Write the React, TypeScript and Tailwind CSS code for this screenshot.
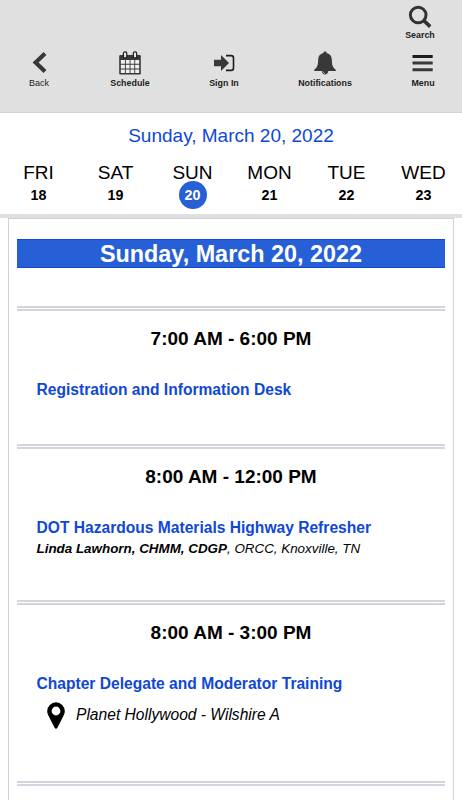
import React, { useState } from 'react';

interface Day {
  name: string;
  date: number;
}

interface Session {
  id: string;
  time: string;
  title: string;
  speaker?: string;
  affiliation?: string;
  location?: string;
}

const days: Day[] = [
  { name: 'FRI', date: 18 },
  { name: 'SAT', date: 19 },
  { name: 'SUN', date: 20 },
  { name: 'MON', date: 21 },
  { name: 'TUE', date: 22 },
  { name: 'WED', date: 23 },
];

const sessions: Session[] = [
  { id: 'desk', time: '7:00 AM - 6:00 PM', title: 'Registration and Information Desk' },
  {
    id: 'dot',
    time: '8:00 AM - 12:00 PM',
    title: 'DOT Hazardous Materials Highway Refresher',
    speaker: 'Linda Lawhorn, CHMM, CDGP',
    affiliation: ', ORCC, Knoxville, TN',
  },
  {
    id: 'delegate',
    time: '8:00 AM - 3:00 PM',
    title: 'Chapter Delegate and Moderator Training',
    location: 'Planet Hollywood - Wilshire A',
  },
];

const BackIcon = () => (
  <svg className="w-6 h-6" viewBox="0 0 24 24" fill="none" stroke="#383838" strokeWidth="4.2">
    <path d="M18 2.6 L8.6 11.6 L18 20.6" />
  </svg>
);

const CalendarIcon = () => (
  <svg className="w-6 h-6" viewBox="0 0 24 24">
    <rect x="1.2" y="4" width="21.6" height="19.6" rx="1.3" fill="#383838" />
    <path
      fill="#f0f0f0"
      d="M2.8 9h4.1v3.8H2.8z M7.8 9h3.8v3.8H7.8z M12.5 9h3.8v3.8h-3.8z M17.2 9h4v3.8h-4z M2.8 13.7h4.1v3.8H2.8z M7.8 13.7h3.8v3.8H7.8z M12.5 13.7h3.8v3.8h-3.8z M17.2 13.7h4v3.8h-4z M2.8 18.4h4.1v3.7H2.8z M7.8 18.4h3.8v3.7H7.8z M12.5 18.4h3.8v3.7h-3.8z M17.2 18.4h4v3.7h-4z"
    />
    <rect x="5.4" y="0.9" width="3.4" height="6" rx="1.5" fill="#e8e8e8" stroke="#1c1c1c" strokeWidth="1.2" />
    <rect x="15.3" y="0.9" width="3.4" height="6" rx="1.5" fill="#e8e8e8" stroke="#1c1c1c" strokeWidth="1.2" />
  </svg>
);

const SignInIcon = () => (
  <svg className="w-6 h-6" viewBox="0 0 24 24">
    <path fill="#383838" d="M2 8.7h7V4L17 12 9 20v-4.7H2z" />
    <path fill="none" stroke="#1c1c1c" strokeWidth="1.6" d="M14 4.6h5.1q2.4 0 2.4 2.4v10q0 2.4-2.4 2.4H14" />
  </svg>
);

const BellIcon = () => (
  <svg className="w-6 h-6" viewBox="0 0 24 24" fill="#383838">
    <path d="M12 0.5c1 0 1.6 0.7 1.6 1.6 3.4 0.8 5.2 3.3 5.2 6.4 0 6 1.4 8.4 4 10.3v1.3H1.2v-1.3C3.8 16.9 5.2 14.5 5.2 8.5c0-3.1 1.8-5.6 5.2-6.4 0-0.9 0.6-1.6 1.6-1.6z" />
    <path d="M8.8 20h6.4c0 2.2-1.4 3.6-3.2 3.6s-3.2-1.4-3.2-3.6z" />
    <path d="M10 20.4c0 1.3.8 2 2 2" fill="none" stroke="#e0e0e0" strokeWidth=".7" />
  </svg>
);

const MenuIcon = () => (
  <svg className="w-6 h-6" viewBox="0 0 24 24">
    <path fill="#1c1c1c" d="M1.5 4h20.2v3H1.5z" />
    <path fill="#383838" d="M1.5 10.6h20.2v3H1.5z M1.5 17.2h20.2v3H1.5z" />
  </svg>
);

const SearchIcon = () => (
  <svg className="w-6 h-6" viewBox="0 0 24 24" fill="none" stroke="#333">
    <circle cx="10.2" cy="10" r="7.8" strokeWidth="3" />
    <path d="M15.6 15.4 L22.2 21.6" strokeWidth="3.6" />
  </svg>
);

const PinIcon = () => (
  <svg className="w-[18px] h-[27px] shrink-0" viewBox="0 0 18 27">
    <path
      fillRule="evenodd"
      d="M9 .3a8.8 8.8 0 0 0-8.8 8.8c0 2 .6 3.3 1.4 4.8l6 11.9q1.4 1.8 2.8 0l6-11.9c.8-1.5 1.4-2.8 1.4-4.8A8.8 8.8 0 0 0 9 .3zM9 4.6a4.4 4.4 0 1 1 0 8.8 4.4 4.4 0 0 1 0-8.8z"
    />
  </svg>
);

interface NavButtonProps {
  label: string;
  className: string;
  labelClass?: string;
  children: React.ReactNode;
}

const NavButton: React.FC<NavButtonProps> = ({ label, className, labelClass = 'mt-[3px] font-bold text-[8.9px]', children }) => (
  <button className={`flex flex-col items-center shrink-0 ${className}`}>
    {children}
    <span className={`leading-[10px] whitespace-nowrap text-[#222] ${labelClass}`}>{label}</span>
  </button>
);

const App: React.FC = () => {
  const [selected, setSelected] = useState<number>(20);

  return (
    <div className="w-full h-screen overflow-hidden flex flex-col bg-white text-black font-['Liberation_Sans',Arial,sans-serif]">
      {/* Toolbar */}
      <header className="h-[113px] shrink-0 bg-[#e0e0e0] border-b border-[#d2d3d8]">
        <div className="flex justify-end pt-[5px] pr-[17px]">
          <NavButton label="Search" className="w-[50px]" labelClass="mt-px font-bold text-[8.9px]">
            <SearchIcon />
          </NavButton>
        </div>
        <nav className="flex pt-[11px]">
          <NavButton label="Back" className="w-[78px]" labelClass="mt-[3px] text-[9px]">
            <BackIcon />
          </NavButton>
          <NavButton label="Schedule" className="w-[104px]">
            <CalendarIcon />
          </NavButton>
          <NavButton label="Sign In" className="w-[84px]">
            <SignInIcon />
          </NavButton>
          <NavButton label="Notifications" className="w-[118px]">
            <BellIcon />
          </NavButton>
          <NavButton label="Menu" className="w-[78px]">
            <MenuIcon />
          </NavButton>
        </nav>
      </header>

      {/* Day picker */}
      <section className="h-[105px] shrink-0 border-b-4 border-[#e0e0e0]">
        <h1 className="pt-[11px] text-center text-[19px] leading-6 text-[#0f48d6]">Sunday, March {selected}, 2022</h1>
        <div className="grid grid-cols-6 pt-[15px]">
          {days.map(day => (
            <button key={day.date} onClick={() => setSelected(day.date)} className="flex flex-col items-center">
              <span className="text-[19px] leading-5">{day.name}</span>
              <span
                className={`w-7 h-7 -mt-[2px] rounded-full text-center text-[14.3px] leading-[29px] font-bold ${
                  day.date === selected ? 'bg-[#275fd6] text-white' : ''
                }`}
              >
                {day.date}
              </span>
            </button>
          ))}
        </div>
      </section>

      {/* Agenda */}
      <main className="flex-1 mx-2 px-2 pt-5 border border-b-0 border-[#cfd0da]">
        <h2 className="h-[29px] mb-[38px] bg-[#275fd6] border-y border-[#1148d2] text-center text-[23.4px] leading-[28px] font-bold text-white">
          Sunday, March {selected}, 2022
        </h2>
        {sessions.map(session => (
          <article key={session.id} className="border-t-5 border-double border-[#d3d4dd] pt-4 pb-[44px]">
            <h3 className="text-center text-[19px] leading-6 font-bold">{session.time}</h3>
            <div className="pt-[29px] pl-[19.5px]">
              <a className="block text-[15.6px] leading-5 font-bold text-[#0f48d6]">{session.title}</a>
              {session.speaker && (
                <p className="mt-[2px] -mb-[2px] text-[13.4px] leading-[18px] italic">
                  <b>{session.speaker}</b>
                  {session.affiliation}
                </p>
              )}
              {session.location && (
                <div className="flex items-center gap-[11.5px] pt-2 pb-2 pl-2.5">
                  <PinIcon />
                  <span className="text-[15.6px] leading-5 italic -mt-[2px]">{session.location}</span>
                </div>
              )}
            </div>
          </article>
        ))}
        <div className="border-t-5 border-double border-[#d3d4dd]" />
      </main>
    </div>
  );
};

export default App;
